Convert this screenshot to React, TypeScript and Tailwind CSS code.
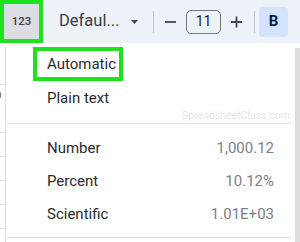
import React from "react";

const font = { fontFamily: "Roboto, 'Noto Sans', Arial, sans-serif" };

function Row({ label, value }: { label: string; value?: string }) {
  return (
    <div className="flex h-[33px] items-center justify-between pl-[41px] pr-[21px]">
      <span className="text-[15px] text-[#2a2b2d]">{label}</span>
      {value && <span className="text-[15px] text-[#7d8185]">{value}</span>}
    </div>
  );
}

export default function App() {
  return (
    <div className="relative h-[242px] w-[300px] overflow-hidden bg-white" style={font}>
      {/* Toolbar */}
      <div className="flex h-[43px] items-center bg-[#edf1f8]">
        <div className="flex h-[43px] w-[43px] shrink-0 items-center justify-center border-[4px] border-[#1fe21f] bg-[#dbdee4]">
          <span className="text-[11.5px] font-medium text-[#3c4043]">123</span>
        </div>
        <div className="ml-[16px] w-[72px] text-[16.5px] leading-none text-[#3c4043]">Defaul...</div>
        <svg width="7" height="4" viewBox="0 0 7 4" className="shrink-0">
          <path d="M0 0h7L3.5 4z" fill="#444746" />
        </svg>
        <div className="ml-[15px] h-[22px] w-px bg-[#c4c7c5]" />
        <svg width="11" height="12" viewBox="0 0 11 12" className="ml-[11px] shrink-0">
          <path d="M0 6h11" stroke="#444746" strokeWidth="1.8" />
        </svg>
        <div className="ml-[10px] flex h-[24px] w-[35px] items-center justify-center rounded-[5px] border border-[#747775] text-[14px] text-[#1f1f1f]">
          11
        </div>
        <svg width="11" height="12" viewBox="0 0 11 12" className="ml-[10px] shrink-0">
          <path d="M0 6h11M5.5 0.5v11" stroke="#444746" strokeWidth="1.8" />
        </svg>
        <div className="ml-[12px] h-[22px] w-px bg-[#c4c7c5]" />
        <div className="ml-[4px] flex h-[30px] w-[29px] items-center justify-center rounded-[4px] bg-[#d3e3fd] text-[15px] font-bold text-[#041e49]">
          B
        </div>
      </div>

      {/* Body */}
      <div className="flex h-[199px]">
        {/* sheet strip */}
        <div className="flex w-[5px] flex-col overflow-hidden">
          <div className="h-[42px] shrink-0 border-b border-[#e3e3e3]" />
          <div className="h-[48px] shrink-0 border-b border-[#e3e3e3] pt-[5px]">
            <span className="ml-[-5px] block text-[10px] leading-[12px] text-[#555]">D</span>
          </div>
          <div className="h-[24px] shrink-0 border-b border-[#e3e3e3]" />
          <div className="h-[24px] shrink-0 border-b border-[#e3e3e3]" />
          <div className="h-[24px] shrink-0 border-b border-[#e3e3e3]" />
          <div className="h-[24px] shrink-0 border-b border-[#e3e3e3]" />
        </div>

        {/* menu */}
        <div className="relative mt-[4px] flex w-[290px] flex-col border-l border-[#dcdcdc] bg-white">
          <div className="ml-[27px] flex h-[34px] w-[90px] items-center border-[4px] border-[#1fe21f] pl-[10px]">
            <span className="text-[15px] text-[#2a2b2d]">Automatic</span>
          </div>
          <div className="flex h-[34px] items-center pl-[41px]">
            <span className="text-[15px] text-[#2a2b2d]">Plain text</span>
          </div>
          <div className="ml-[1px] mr-[4px] mt-[8px] h-px bg-[#e2e2e2]" />
          <div className="pt-[8px]">
            <Row label="Number" value="1,000.12" />
            <Row label="Percent" value="10.12%" />
            <Row label="Scientific" value="1.01E+03" />
          </div>
          <div className="ml-[1px] mr-[4px] mt-[6px] h-px bg-[#e2e2e2]" />
          <span className="absolute left-[176px] top-[62px] whitespace-nowrap text-[10.5px] leading-[14px] text-[#e6e6e6]">
            SpreadsheetClass.com
          </span>
        </div>

        {/* right strip */}
        <div className="mt-[5px] w-[5px] bg-[#dcdcdc]" />
      </div>
    </div>
  );
}
